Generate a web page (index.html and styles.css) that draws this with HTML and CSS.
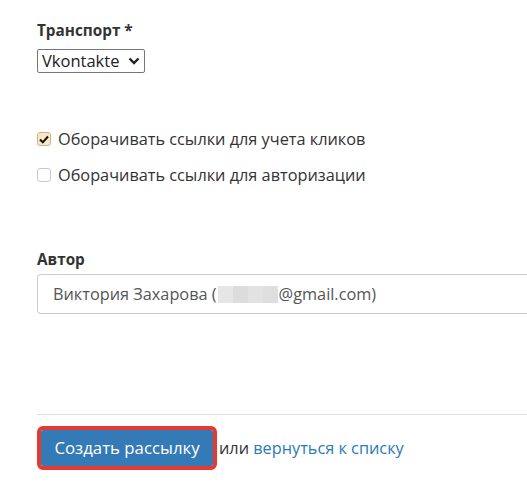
FILE: index.html
```html
<!DOCTYPE html>
<html lang="ru">
<head>
<meta charset="utf-8">
<link rel="stylesheet" href="styles.css">
</head>
<body>
<form class="form">
  <div class="field field-transport">
    <label class="label">Транспорт *</label>
    <div class="select">
      <span class="select-value">Vkontakte</span>
      <svg class="chevron" width="12" height="8" viewBox="0 0 12 8"><path d="M1.5 1.5 L6 6 L10.5 1.5" fill="none" stroke="#222" stroke-width="2.4"/></svg>
    </div>
  </div>

  <div class="checks">
    <label class="check">
      <span class="box box-checked">
        <svg width="10" height="9" viewBox="0 0 10 9"><path d="M1 4.5 L3.8 7.3 L9 1.5" fill="none" stroke="#111" stroke-width="2"/></svg>
      </span>
      <span class="check-text">Оборачивать ссылки для учета кликов</span>
    </label>
    <label class="check">
      <span class="box"></span>
      <span class="check-text">Оборачивать ссылки для авторизации</span>
    </label>
  </div>

  <div class="field field-author">
    <label class="label">Автор</label>
    <div class="input">
      <span>Виктория Захарова (</span><span class="blur"><i></i><i></i><i></i><i></i></span><span>@gmail.com)</span>
    </div>
  </div>

  <hr class="divider">

  <div class="actions">
    <span class="btn-outline"><button type="button" class="btn">Создать рассылку</button></span>
    <span class="or">или <a href="#" class="link">вернуться к списку</a></span>
  </div>
</form>
</body>
</html>
```

FILE: styles.css
```css
html, body {
  margin: 0;
  padding: 0;
  background: #fff;
  overflow: hidden;
}
body {
  font-family: "Open Sans", "Liberation Sans", sans-serif;
  color: #333;
  font-size: 16.3px;
}
.form {
  padding: 21px 0 0 37px;
}
.label {
  display: block;
  font-weight: 700;
  font-size: 15.3px;
  line-height: 18px;
  color: #333;
}
.select {
  margin-top: 10px;
  height: 22px;
  width: 98px;
  border: 1px solid #767676;
  border-radius: 2px;
  display: flex;
  align-items: center;
  justify-content: space-between;
  padding: 0 4px 0 4px;
  box-sizing: content-box;
}
.select-value {
  font-size: 16.5px;
  color: #222;
  line-height: 20px;
}
.chevron { display: block; }
.checks {
  margin-top: 55px;
  display: flex;
  flex-direction: column;
  gap: 14px;
}
.check {
  display: flex;
  align-items: center;
  gap: 7px;
  line-height: 22px;
  color: #333;
}
.box {
  width: 12px;
  height: 12px;
  border: 1px solid #c8c8c8;
  border-radius: 3px;
  background: #fff;
  display: flex;
  align-items: center;
  justify-content: center;
}
.box-checked {
  background: #f7e7c6;
  border-color: #c9b48e;
}
.field-author {
  margin-top: 64px;
}
.input {
  margin-top: 6px;
  height: 40px;
  border: 1px solid #ccc;
  border-right: none;
  border-radius: 4px 0 0 4px;
  box-sizing: border-box;
  display: flex;
  align-items: center;
  padding-left: 15px;
  color: #555;
  white-space: nowrap;
}
.blur {
  display: inline-flex;
  height: 17px;
  width: 60px;
  margin: 0 1px;
}
.blur i {
  flex: 1;
  background: #e6e6e6;
}
.blur i:nth-child(2) { background: #dcdcdc; }
.blur i:nth-child(3) { background: #e2e2e2; }
.blur i:nth-child(4) { background: #dedede; }
.divider {
  margin: 100px 0 0 0;
  border: none;
  border-top: 1px solid #ddd;
  height: 0;
}
.actions {
  margin-top: 11px;
  display: flex;
  align-items: center;
}
.btn-outline {
  display: inline-block;
  border: 4px solid #e53a32;
  border-radius: 6px;
  line-height: 0;
}
.btn {
  font-family: inherit;
  font-size: 16.8px;
  line-height: 20px;
  color: #fff;
  background: #337ab7;
  border: none;
  border-radius: 2px;
  height: 36px;
  width: 172px;
  padding: 0;
}
.or {
  margin-left: 2px;
  color: #333;
}
.link {
  color: #2a7ab8;
  text-decoration: none;
}
```
